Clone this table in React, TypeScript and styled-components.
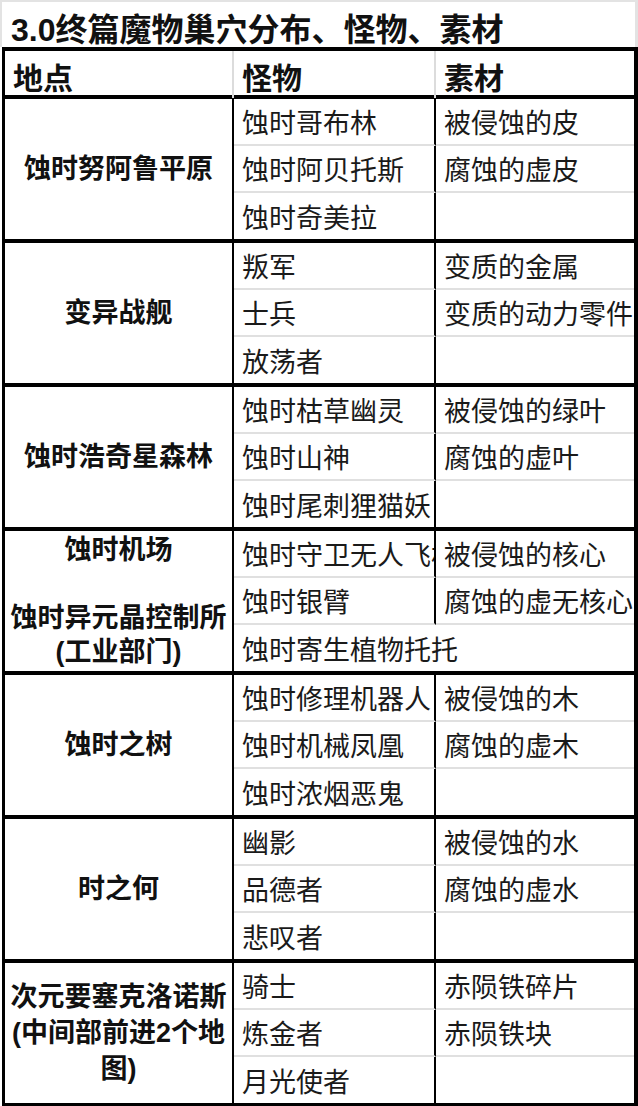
import React from "react";
import styled, { createGlobalStyle } from "styled-components";

type Row = { monster: string; material?: string; merged?: boolean };
type Group = { place: React.ReactNode; rows: Row[]; lineHeight?: number };

const GROUPS: Group[] = [
    {
        place: "蚀时努阿鲁平原",
        rows: [
            { monster: "蚀时哥布林", material: "被侵蚀的皮" },
            { monster: "蚀时阿贝托斯", material: "腐蚀的虚皮" },
            { monster: "蚀时奇美拉", material: "" },
        ],
    },
    {
        place: "变异战舰",
        rows: [
            { monster: "叛军", material: "变质的金属" },
            { monster: "士兵", material: "变质的动力零件" },
            { monster: "放荡者", material: "" },
        ],
    },
    {
        place: "蚀时浩奇星森林",
        rows: [
            { monster: "蚀时枯草幽灵", material: "被侵蚀的绿叶" },
            { monster: "蚀时山神", material: "腐蚀的虚叶" },
            { monster: "蚀时尾刺狸猫妖", material: "" },
        ],
    },
    {
        place: (
            <>
                蚀时机场
                <br />
                <br />
                蚀时异元晶控制所
                <br />
                (工业部门)
            </>
        ),
        rows: [
            { monster: "蚀时守卫无人飞机", material: "被侵蚀的核心" },
            { monster: "蚀时银臂", material: "腐蚀的虚无核心" },
            { monster: "蚀时寄生植物托托", merged: true },
        ],
    },
    {
        place: "蚀时之树",
        rows: [
            { monster: "蚀时修理机器人", material: "被侵蚀的木" },
            { monster: "蚀时机械凤凰", material: "腐蚀的虚木" },
            { monster: "蚀时浓烟恶鬼", material: "" },
        ],
    },
    {
        place: "时之何",
        rows: [
            { monster: "幽影", material: "被侵蚀的水" },
            { monster: "品德者", material: "腐蚀的虚水" },
            { monster: "悲叹者", material: "" },
        ],
    },
    {
        place: "次元要塞克洛诺斯(中间部前进2个地图)",
        lineHeight: 36,
        rows: [
            { monster: "骑士", material: "赤陨铁碎片" },
            { monster: "炼金者", material: "赤陨铁块" },
            { monster: "月光使者", material: "" },
        ],
    },
];

const GlobalStyle = createGlobalStyle`
    body {
        margin: 0;
        background: #fff;
        font-family: "Liberation Sans", "Noto Sans CJK SC", sans-serif;
        color: #1a1a1a;
    }
`;

const Sheet = styled.div`
    width: 638px;
`;

const Title = styled.div`
    height: 47px;
    box-sizing: border-box;
    border-top: 2px solid #e3e3e3;
    border-left: 2px solid #e3e3e3;
    border-right: 3px solid #e3e3e3;
    padding: 4px 0 0 9px;
    display: flex;
    align-items: center;
    font-size: 32px;
    font-weight: 700;
    color: #111;
    white-space: nowrap;
`;

const Table = styled.div`
    margin-left: 2px;
    width: 636px;
    box-sizing: border-box;
    border: 4px solid #000;
    border-left-width: 3px;
`;

const Columns = styled.div`
    display: grid;
    grid-template-columns: 229px 202px 1fr;
`;

const Header = styled(Columns)`
    height: 44px;
    border-bottom: 4px solid #000;
`;

const HeadCell = styled.div<{ $last?: boolean }>`
    display: flex;
    align-items: center;
    padding: 3px 0 0 8px;
    border-right: ${(p) => (p.$last ? "none" : "2px solid #dcdcdc")};
    font-size: 30px;
    font-weight: 700;
    color: #111;
`;

const GroupBox = styled(Columns)<{ $last?: boolean }>`
    grid-template-rows: 47px 47px 46px;
    border-bottom: ${(p) => (p.$last ? "none" : "4px solid #000")};
`;

const Place = styled.div<{ $lh: number }>`
    grid-row: 1 / span 3;
    border-right: 2px solid #000;
    display: flex;
    align-items: center;
    justify-content: center;
    text-align: center;
    padding: 0 4px;
    font-size: 27px;
    font-weight: 700;
    line-height: ${(p) => p.$lh}px;
    color: #111;
`;

const Cell = styled.div<{ $span?: boolean; $divider?: boolean; $bottom?: boolean }>`
    grid-column: ${(p) => (p.$span ? "span 2" : "auto")};
    display: flex;
    align-items: center;
    padding-left: 8px;
    font-size: 27px;
    white-space: nowrap;
    overflow: hidden;
    border-right: ${(p) => (p.$divider ? "2px solid #000" : "none")};
    border-bottom: ${(p) => (p.$bottom ? "2px solid #e0e0e0" : "none")};
`;

export default function App() {
    return (
        <Sheet>
            <GlobalStyle />
            <Title>3.0终篇魔物巢穴分布、怪物、素材</Title>
            <Table>
                <Header>
                    <HeadCell>地点</HeadCell>
                    <HeadCell>怪物</HeadCell>
                    <HeadCell $last>素材</HeadCell>
                </Header>
                {GROUPS.map((g, gi) => (
                    <GroupBox key={gi} $last={gi === GROUPS.length - 1}>
                        <Place $lh={g.lineHeight ?? 34}>{g.place}</Place>
                        {g.rows.map((r, ri) => {
                            const bottom = ri < g.rows.length - 1;
                            if (r.merged) {
                                return (
                                    <Cell key={ri} $span $bottom={bottom}>
                                        {r.monster}
                                    </Cell>
                                );
                            }
                            return (
                                <React.Fragment key={ri}>
                                    <Cell $divider $bottom={bottom}>
                                        {r.monster}
                                    </Cell>
                                    <Cell $bottom={bottom}>{r.material}</Cell>
                                </React.Fragment>
                            );
                        })}
                    </GroupBox>
                ))}
            </Table>
        </Sheet>
    );
}
